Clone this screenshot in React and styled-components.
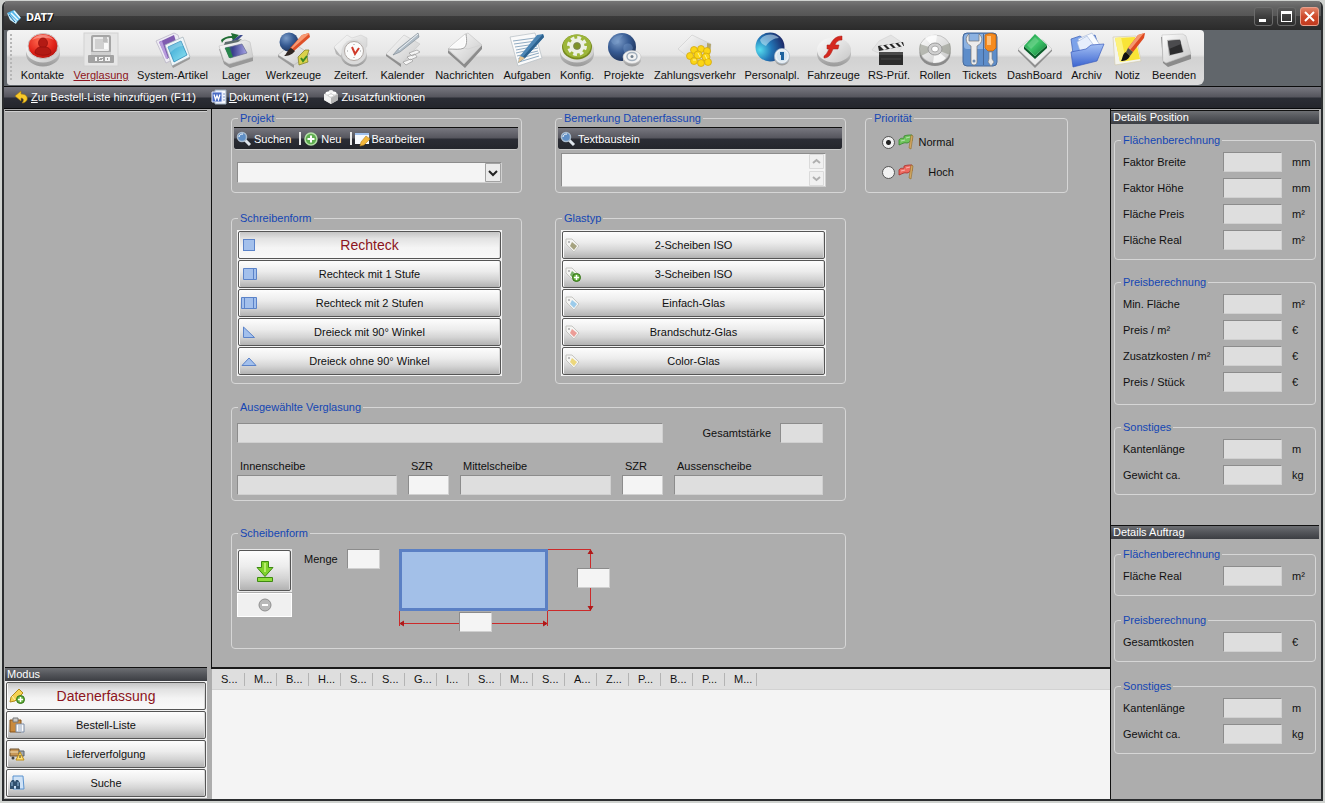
import React, { useId, useState } from 'react';
import styled, { createGlobalStyle, css } from 'styled-components';

const ink = '#101010';
const paper = '#f4f4f4';
const darkBar = 'linear-gradient(#77777f 0, #55555d 48%, #2b2d35 52%, #24262c 100%)';

const GlobalStyle = createGlobalStyle`
  * { box-sizing: border-box; }
  body { margin: 0; background: #cfd2cf; }
  body, button, input, select, textarea {
    font-family: "Liberation Sans", Arial, sans-serif;
    font-size: 11px;
    line-height: 12px;
    color: ${ink};
  }
`;

/* ---------- window frame ---------- */

const Desktop = styled.div`
  display: flex;
  min-height: 100vh;
  padding: 1px 2px 2px;
`;

const Window = styled.div`
  flex: 1;
  min-width: 0;
  display: flex;
  flex-direction: column;
  border: solid #2b2d2f;
  border-width: 0 2px 2px;
  border-radius: 6px 6px 0 0;
  background: #adadad;
  overflow: hidden;
`;

const TitleBar = styled.header`
  display: flex;
  align-items: center;
  gap: 4px;
  height: 29px;
  padding: 2px 2px 0;
  background: linear-gradient(#767676 0, #636363 20%, #565656 50%, #3b3b3b 52%, #2b2b2b 100%);
`;

const Title = styled.h1`
  flex: 1;
  margin: 0;
  font: bold 11px/16px "Noto Sans", sans-serif;
  color: #fff;
  text-shadow: 1px 1px 0 #111;
`;

const WindowButtons = styled.div`
  display: flex;
  gap: 4px;
`;

const WindowButton = styled.button`
  width: 19px;
  height: 19px;
  padding: 0;
  border: 1px solid ${(p) => (p.$close ? '#e9a08c' : '#6b6b6b')};
  border-radius: 3px;
  background: ${(p) =>
    p.$close ? 'linear-gradient(#e08268, #cf4a2c 50%, #c23a1e)' : 'linear-gradient(#5a5a5a, #3e3e3e 50%, #2d2d2d)'};
  svg { display: block; }
`;

/* ---------- tool strips ---------- */

const ToolStrip = styled.div`
  display: flex;
  height: 57px;
  padding: 0 3px;
  border-bottom: 1px solid #0c0c0c;
  background: #61666b;
`;

const Tools = styled.nav`
  display: flex;
  height: 55px;
  padding-right: 4px;
  border-radius: 3px 4px 6px 3px;
  background: linear-gradient(#f3f3f3, #e6e6e6 45%, #d2d2d2 50%, #dcdcdc 100%);
`;

const Grip = styled.span`
  width: 9px;
  margin: 3px 0;
  background: radial-gradient(circle, #b6b6b6 1px, transparent 1px) 2px 0 / 4px 4px repeat-y;
`;

const Tool = styled.button`
  display: flex;
  flex-direction: column;
  align-items: center;
  width: ${(p) => p.$width}px;
  padding: 2px 0 0;
  border: 0;
  background: none;
  white-space: nowrap;
  color: ${(p) => (p.$active ? '#8c1420' : ink)};
  text-decoration: ${(p) => (p.$active ? 'underline' : 'none')};
  svg { flex: none; margin-bottom: 1px; }
`;

const MenuBar = styled.nav`
  display: flex;
  align-items: center;
  gap: 15px;
  height: 22px;
  padding: 0 9px 2px;
  border-bottom: 1px solid #08090b;
  background: ${darkBar};
`;

const BarButton = styled.button`
  display: flex;
  align-items: center;
  gap: 2px;
  padding: 0;
  border: 0;
  background: none;
  color: #fff;
  white-space: nowrap;
`;

/* ---------- body ---------- */

const Body = styled.div`
  flex: 1;
  display: grid;
  grid-template-columns: 207px minmax(0, 1fr) 211px;
`;

const Side = styled.aside`
  display: flex;
  flex-direction: column;
  justify-content: space-between;
  padding: 1px 4px 1px 1px;
`;

const TopRule = styled.div`
  height: 2px;
  border-top: 1px solid #2a2a2a;
  border-bottom: 1px solid #d0d0d0;
`;

const PanelTitle = styled.h2`
  height: 14px;
  margin: 0;
  padding-left: 2px;
  border-top: 1px solid #111;
  background: linear-gradient(#6d6f73, #55575c 45%, #3c3e43);
  font: 11px/12px "Liberation Sans", Arial, sans-serif;
  color: #fff;
`;

const Center = styled.main`
  display: flex;
  flex-direction: column;
  min-width: 0;
`;

const Form = styled.div`
  display: flex;
  align-items: flex-start;
  gap: 19px;
  padding: 3px 19px 18px;
  border-left: 1px solid #111;
  border-bottom: 2px solid #1a1a1a;
`;

const FormColumn = styled.div`
  display: flex;
  flex-direction: column;
  width: 615px;
`;

const FormRow = styled.div`
  display: grid;
  grid-template-columns: repeat(${(p) => p.$columns ?? 1}, 1fr);
  gap: 33px;
  margin-bottom: ${(p) => p.$after ?? 0}px;
`;

const Group = styled.fieldset`
  min-width: 0;
  margin: 0;
  padding: 3px 3px ${(p) => p.$bottom ?? 9}px 2px;
  border: 1px solid #d6d6d6;
  border-radius: 4px;
  ${(p) => p.$width && css`width: ${p.$width}px;`}
`;

const Legend = styled.legend`
  margin-left: 4px;
  padding: 0 2px;
  color: #1446b4;
`;

const Inset = styled.div`
  margin-left: 3px;
  padding-top: ${(p) => p.$top ?? 3}px;
`;

const GroupBar = styled.div`
  display: flex;
  align-items: center;
  gap: 6px;
  height: 23px;
  padding: 0 2px;
  border-top: 1px solid #111;
  border-bottom: 1px solid #c8c8c8;
  border-radius: 0 0 3px 3px;
  background: ${darkBar};
`;

const BarDivider = styled.span`
  width: 2px;
  height: 13px;
  margin: 0 -4px 0 2px;
  background: #e8e8e8;
`;

const boxed = css`
  display: block;
  margin: 0;
  padding: 0 3px;
  border: 1px solid;
  border-color: #8c8c8c #d0d0d0 #d0d0d0 #8c8c8c;
  border-radius: 0;
  outline: 0;
`;

const Field = styled.input`
  ${boxed}
  width: ${(p) => (p.$width ? `${p.$width}px` : '100%')};
  height: 20px;
  background: ${(p) => (p.readOnly ? '#dedede' : paper)};
`;

const SelectBox = styled.div`
  display: grid;
  align-items: center;
  justify-items: end;
  width: 265px;
  > * { grid-area: 1 / 1; }
  svg { margin-right: 1px; pointer-events: none; }
`;

const Select = styled.select`
  ${boxed}
  width: 100%;
  height: 21px;
  appearance: none;
  background: ${paper};
`;

const NoteBox = styled.div`
  display: grid;
  justify-items: end;
  align-items: center;
  width: 265px;
  > * { grid-area: 1 / 1; }
  svg { margin-right: 2px; }
`;

const Note = styled.textarea`
  ${boxed}
  width: 100%;
  height: 34px;
  resize: none;
  background: ${paper};
`;

const RadioRow = styled.label`
  display: flex;
  align-items: center;
  gap: 3px;
  width: 72px;
  height: 30px;
  margin-left: 14px;
`;

const RadioText = styled.span`
  flex: 1;
  text-align: right;
`;

const Radio = styled.input`
  appearance: none;
  width: 13px;
  height: 13px;
  margin: 0;
  border: 1px solid #555;
  border-radius: 50%;
  background: #f1f1f1;
  &:checked { background: radial-gradient(circle, #222 0 2px, #f1f1f1 3px); }
`;

/* ---------- stacked push buttons ---------- */

const Stack = styled.div`
  display: flex;
  flex-direction: column;
  gap: 1px;
  ${(p) => p.$width && css`width: ${p.$width}px;`}
  padding: 1px;
  background: #f2f2f2;
`;

const raised = css`
  border: 1px solid #555;
  border-radius: 2px;
  background: linear-gradient(#fdfdfd, #ececec 40%, #d4d4d4 70%, #b2b2b2);
  box-shadow: inset 1px 0 0 #fff, inset -1px 0 0 #d8d8d8;
`;

const StackButton = styled.button`
  ${raised}
  display: grid;
  grid-template-columns: 16px 1fr 16px;
  align-items: center;
  height: 28px;
  padding: 0 2px;
  ${(p) =>
    p.$active &&
    css`
      background: linear-gradient(#c4c4c4, #e2e2e2 25%, #f4f4f4 60%, #f8f8f8);
      color: #8c1420;
      font-size: 14px;
      line-height: 16px;
    `}
`;

/* ---------- glazing details ---------- */

const SummaryRow = styled.div`
  display: flex;
  align-items: center;
  justify-content: space-between;
  width: 586px;
  margin-bottom: 17px;
`;

const Labelled = styled.div`
  display: flex;
  align-items: center;
  gap: 9px;
`;

const PaneGrid = styled.div`
  display: grid;
  grid-template-columns: 160px 41px 151px 41px 149px;
  gap: 11px;
  label { display: block; padding: 0 0 3px 3px; }
`;

const ShapeRow = styled.div`
  display: flex;
  align-items: flex-start;
`;

const Actions = styled.div`
  display: flex;
  flex-direction: column;
  gap: 1px;
  width: 55px;
  margin-right: 12px;
`;

const SaveFrame = styled.div`
  padding: 1px;
  background: #e8e8e8;
`;

const SaveButton = styled.button`
  ${raised}
  display: grid;
  place-items: center;
  width: 100%;
  height: 41px;
  padding: 0;
`;

const RemoveButton = styled.button`
  display: grid;
  place-items: center;
  height: 24px;
  padding: 0;
  border: 1px solid #fff;
  background: #f0f0f0;
`;

const Drawing = styled.div`
  position: relative;
  width: 212px;
  height: 84px;
  margin-left: 19px;
  svg { display: block; }
`;

const Dimension = styled(Field)`
  position: absolute;
  left: ${(p) => p.$x}px;
  top: ${(p) => p.$y}px;
`;

/* ---------- list ---------- */

const ListArea = styled.div`
  flex: 1;
  margin-left: 1px;
  background: ${paper};
`;

const ListHead = styled.div`
  height: 21px;
  border-bottom: 1px solid #d2d2d2;
  background: #dedede;
`;

const List = styled.table`
  table-layout: fixed;
  width: 545px;
  border-collapse: collapse;
`;

const ListHeading = styled.th`
  width: ${(p) => (p.$first ? 33 : 32)}px;
  height: 20px;
  padding: 0 0 0 9px;
  background: linear-gradient(#b4b4b4, #b4b4b4) right center / 1px 13px no-repeat;
  text-align: left;
  font-weight: normal;
  white-space: nowrap;
`;

/* ---------- details ---------- */

const Details = styled.aside`
  border-left: 1px solid #111;
  padding-top: 1px;
`;

const DetailSection = styled.section`
  margin: 0 2px 30px 0;
`;

const DetailGroups = styled.div`
  display: flex;
  flex-direction: column;
  gap: ${(p) => p.$gap}px;
  padding: ${(p) => p.$top}px 3px 0;
`;

const DetailRows = styled.div`
  display: flex;
  flex-direction: column;
  gap: 6px;
  padding: 3px 0 0 6px;
`;

const DetailRow = styled.div`
  display: grid;
  grid-template-columns: 100px 59px 1fr;
  align-items: center;
  white-space: nowrap;
`;

const Unit = styled.span`
  padding-left: 10px;
`;

/* ---------- drawings ---------- */

const HiddenDefs = styled.svg`
  position: absolute;
`;

const Art = ({ size = 36, children }) => (
  <svg width={size} height={size} viewBox={`0 0 ${size} ${size}`} aria-hidden="true">
    {children}
  </svg>
);

const Defs = () => (
  <HiddenDefs width="0" height="0" aria-hidden="true">
    <defs>
      <linearGradient id="puck" x1="0" y1="0" x2="1" y2="1">
        <stop offset="0" stopColor="#fdfdfd" /><stop offset="1" stopColor="#c6c6c6" />
      </linearGradient>
      <linearGradient id="rim" x1="0" y1="0" x2="0" y2="1">
        <stop offset="0" stopColor="#dedede" /><stop offset="1" stopColor="#999" />
      </linearGradient>
      <radialGradient id="red" cx=".4" cy=".3" r=".8">
        <stop offset="0" stopColor="#ff6a50" /><stop offset=".6" stopColor="#e2231a" /><stop offset="1" stopColor="#a50f0c" />
      </radialGradient>
      <radialGradient id="globe" cx=".35" cy=".3" r=".8">
        <stop offset="0" stopColor="#7b9cc8" /><stop offset=".5" stopColor="#365a92" /><stop offset="1" stopColor="#1a2c50" />
      </radialGradient>
      <radialGradient id="bright" cx=".15" cy=".6" r=".9">
        <stop offset="0" stopColor="#55dcee" /><stop offset=".45" stopColor="#2277b8" /><stop offset="1" stopColor="#1b2260" />
      </radialGradient>
      <linearGradient id="cyan" x1="0" y1="0" x2="1" y2="1">
        <stop offset="0" stopColor="#2f9fd0" /><stop offset="1" stopColor="#8fe4f2" />
      </linearGradient>
      <linearGradient id="green" x1="0" y1="0" x2="1" y2="1">
        <stop offset="0" stopColor="#1c9a48" /><stop offset=".5" stopColor="#3fc46a" /><stop offset="1" stopColor="#0f7a35" />
      </linearGradient>
      <linearGradient id="folder" x1="0" y1="0" x2="0" y2="1">
        <stop offset="0" stopColor="#a5c1f5" /><stop offset="1" stopColor="#3b64cf" />
      </linearGradient>
      <linearGradient id="screen" x1="0" y1="0" x2="1" y2="0">
        <stop offset="0" stopColor="#2c8a4a" /><stop offset=".35" stopColor="#3b3f8e" /><stop offset="1" stopColor="#a9a6e8" />
      </linearGradient>
    </defs>
  </HiddenDefs>
);

const Puck = () => (
  <>
    <ellipse cx="18" cy="22" rx="17" ry="12.500" fill="url(#rim)" />
    <ellipse cx="18" cy="18" rx="17" ry="12.500" fill="url(#puck)" />
  </>
);

const toolArt = {
  contacts: (
    <Art>
      <Puck />
      <ellipse cx="18" cy="14" rx="15" ry="12.500" fill="url(#red)" stroke="#c8c8c8" />
      <path d="M7 8c5-7 17-7 22 0C23 5 13 5 7 8z" fill="#fff" opacity=".35" />
      <ellipse cx="18" cy="11" rx="4.500" ry="5" fill="#b31a14" stroke="#8f0f0c" strokeWidth=".7" />
      <path d="M10 21c0-4 3-6 6-6h4c3 0 6 2 6 6-4 3-12 3-16 0z" fill="#b31a14" stroke="#8f0f0c" strokeWidth=".7" />
    </Art>
  ),
  glazing: (
    <Art>
      <rect x="1" y="1" width="34" height="33" fill="#e6e6e6" stroke="#d2d2d2" />
      <rect x="8" y="3" width="20" height="18" rx="2" fill="#a6a6a6" />
      <rect x="10" y="5" width="16" height="14" rx="1" fill="#ececec" />
      <path d="M12 7h13v4h-4v6h-9z" fill="#d0d0d0" /><path d="M21 11h4v6h-4z" fill="#fafafa" /><path d="M20 5h4v5h-4z" fill="#bdbdbd" />
      <path d="M8 20h20v3H8z" fill="#cfcfcf" />
      <rect x="5" y="23" width="26" height="8" rx="1" fill="#a2a2a2" />
      <path d="M12 25h2v4h-2zM16 25h4v1h-3v1h3v2h-4v-1h3v-1h-3zM22 25h5v4h-5zM24 26v2h1v-2z" fill="#f4f4f4" />
    </Art>
  ),
  system: (
    <Art>
      <path d="m1 9 18-8 4 2 6 19-18 9z" fill="#eeecf4" stroke="#b4afc2" strokeWidth=".7" />
      <path d="m4 10 15-7 5 16-12 8z" fill="#7f5bb0" /><path d="m4 10 3-1 6 17-2 1z" fill="#b79bdc" />
      <path d="m10 13 18-8 7 20-18 9z" fill="#eef5f8" stroke="#a4b0b8" strokeWidth=".7" />
      <path d="m13 15 13-6 6 14-13 7z" fill="url(#cyan)" stroke="#1d7fb2" strokeWidth=".7" />
      <path d="m13 15 13-6 2 5c-5 0-9 3-13 7z" fill="#fff" opacity=".25" />
      <path d="m17 34 18-9v2l-17 9z" fill="#9a9a9a" />
    </Art>
  ),
  stock: (
    <Art>
      <path d="m1 17 5 15 6 4 23-7v-4z" fill="#999" />
      <path d="m1 14 26-6 5 2 3 15-24 7-5-3z" fill="url(#puck)" stroke="#c0c0c0" strokeWidth=".6" />
      <path d="m7 16 17-4 5 9-17 5z" fill="url(#screen)" stroke="#666a90" strokeWidth=".7" />
      <path d="m11 15 4 10-4 1-4-10z" fill="#27854a" />
      <path d="M3 8c2-2 6-4 11-4l-1-3 8 2-6 6-1-3c-5 0-8 1-10 5z" fill="#1f6c33" />
      <path d="m12 10 10-7h3l-5 5z" fill="#3d4a8c" /><path d="m7 10 17-3-4 3-14 3z" fill="#5d6c6c" />
    </Art>
  ),
  tools: (
    <Art>
      <path d="m2 23 15-12 17 11-16 11z" fill="url(#puck)" stroke="#b4b4b4" strokeWidth=".6" /><path d="m2 23 16 10v3L2 25z" fill="#999" />
      <circle cx="13" cy="10" r="9.500" fill="url(#globe)" />
      <path d="m26 3 7-2 1 4-16 14-4-3z" fill="#de5028" /><path d="m26 3 7-2v1L16 17l-1-1z" fill="#f79a74" />
      <path d="m15 16 4 3c-3 4-7 5-11 5 3-2 3-6 7-8z" fill="#2f2622" />
      <path d="m22 25 7-7h4l-2 6 1 6-9 3z" fill="#d9d24a" stroke="#7c7b20" strokeWidth=".7" />
      <path d="m25 26 2 3 4-5" fill="none" stroke="#3a8a24" strokeWidth="2" />
    </Art>
  ),
  time: (
    <Art>
      <path d="M1 15 14 3l5 3 9-3 6 3v8L21 32 4 22z" fill="url(#puck)" stroke="#cacaca" strokeWidth=".5" />
      <path d="m1 15 6 8 9 4v4L3 22z" fill="#b5b5b5" />
      <ellipse cx="21" cy="24" rx="13" ry="10.500" fill="url(#rim)" />
      <circle cx="21" cy="20" r="12.500" fill="#dadada" /><circle cx="21" cy="19" r="9.500" fill="#fbfbfb" stroke="#b0a8a4" />
      <path d="m19 15 3 7 4-6" fill="none" stroke="#d03a2a" strokeWidth="2" />
      <path d="M21 12v1M21 25v1M14 19h1M27 19h1" stroke="#999" />
    </Art>
  ),
  calendar: (
    <Art>
      <path d="M1 22 19 3l16 9-19 20z" fill="url(#puck)" stroke="#c6c6c6" strokeWidth=".6" />
      <path d="m1 22 15 10v3L1 24z" fill="#8f8f8f" />
      <path d="M33 1 13 17l-5 6 7-3L34 5z" fill="#b2bec8" stroke="#78848e" strokeWidth=".6" /><path d="M33 2 14 18" stroke="#eef2f5" />
      <path d="m24 21 8-3 3 2-8 4zM22 25l8-3 2 3-7 3zM18 30l8-3 2 2-7 4z" fill="#f6f6f6" stroke="#9a9a9a" strokeWidth=".7" />
    </Art>
  ),
  messages: (
    <Art>
      <path d="M1 18 17 32l18-19v4L18 36 1 21z" fill="#8c8c8c" />
      <path d="M1 17 5 13 18 2l3-1 14 12-18 19z" fill="url(#puck)" stroke="#c0c0c0" strokeWidth=".6" />
      <path d="M19 2c1 7 1 11-2 14-4 2-9 1-16 1" fill="#fff" stroke="#a3a3a3" /><path d="m3 16 15-12c0 6 0 8-2 11-4 1-8 1-13 1z" fill="#fafafa" />
      <path d="m17 16 4 1 13-4" fill="none" stroke="#d5d5d5" />
    </Art>
  ),
  tasks: (
    <Art>
      <path d="m1 5 25-4 7 25-24 8z" fill="#fafafa" stroke="#b5bdc3" strokeWidth=".7" />
      <path d="m4 9 22-3M5 12l22-3M6 15l21-3M7 18l21-4M7 21l22-5M8 24l21-5M9 27l21-6M10 30l20-6" stroke="#7597b4" strokeWidth=".8" />
      <path d="m28 3 6-1 1 3-19 21-7 5 2-7z" fill="#4d86b5" /><path d="m34 2 1 3-19 21-7 5 3-4z" fill="#2d628f" />
      <path d="m11 24 5 2-7 5z" fill="#e6c594" />
    </Art>
  ),
  config: (
    <Art>
      <Puck />
      <ellipse cx="18" cy="15" rx="15" ry="12.500" fill="#76891f" /><ellipse cx="18" cy="14" rx="14" ry="11.500" fill="#9db63a" />
      <circle cx="18" cy="14" r="8" fill="none" stroke="#edf0e4" strokeWidth="4" strokeDasharray="3.600 2.680" />
      <circle cx="18" cy="14" r="5.500" fill="none" stroke="#edf0e4" strokeWidth="4" />
      <circle cx="18" cy="14" r="3.500" fill="#7e9228" stroke="#777" strokeWidth=".6" />
    </Art>
  ),
  projects: (
    <Art>
      <circle cx="16" cy="15" r="14" fill="url(#globe)" />
      <path d="M5 9c4-6 9-6 12-6-1 3-5 4-4 8-3 1-5 4-8-2zM18 13c5-3 8-1 9 3-2 5-4 7-7 9-1-5-4-7-2-12z" fill="#7da0cc" opacity=".4" />
      <ellipse cx="26" cy="28" rx="9" ry="6.500" fill="url(#rim)" /><ellipse cx="26" cy="25" rx="9" ry="6.500" fill="#f2f2f2" stroke="#c2c2c2" strokeWidth=".6" />
      <ellipse cx="26" cy="24.500" rx="5" ry="4" fill="none" stroke="#a3b0bd" strokeWidth="1.500" /><circle cx="26" cy="24.500" r="1.500" fill="#72818f" />
    </Art>
  ),
  payments: (
    <Art>
      <path d="m1 17 14-14 19 9-1 10-18 6z" fill="url(#puck)" stroke="#cacaca" strokeWidth=".6" />
      <path d="m30 11 4 1-1 10-3-2z" fill="#b3a568" />
      <g fill="#fbd515" stroke="#cfa20c" strokeWidth=".7">
        <circle cx="17" cy="18" r="3.500" /><circle cx="24" cy="17" r="3.500" /><circle cx="30" cy="19" r="3.500" />
        <circle cx="13" cy="24" r="3.500" /><circle cx="21" cy="23" r="4" /><circle cx="29" cy="25" r="4" />
        <circle cx="17" cy="29" r="3.500" /><circle cx="24" cy="31" r="3.500" /><circle cx="31" cy="30" r="3.500" />
      </g>
      <path d="m21 21 2 4M28 23l2 4M16 28h3" stroke="#fff7a0" />
    </Art>
  ),
  staff: (
    <Art>
      <circle cx="16" cy="15" r="14.500" fill="url(#bright)" />
      <path d="M6 8c4-7 15-7 19-2-5 0-10 3-13 8-2-1-5-2-6-6z" fill="#d9f2fb" opacity=".5" />
      <ellipse cx="28" cy="27" rx="7.500" ry="6.500" fill="url(#rim)" /><circle cx="28" cy="24" r="7.500" fill="#edf2f6" stroke="#a9bccb" strokeWidth=".7" />
      <circle cx="28" cy="24" r="5.500" fill="#d6e5f0" /><path d="M26 20h4v8h-3v-5h-1z" fill="#1b619e" />
    </Art>
  ),
  vehicles: (
    <Art>
      <Puck />
      <path d="M26 4c-7 0-10 5-12 9h-3v4h2c-2 4-3 6-5 7v2c5 0 7-4 9-9h5l1-4h-4c1-3 3-5 7-5z" fill="#d5281f" stroke="#a81c16" strokeWidth=".5" />
    </Art>
  ),
  inspect: (
    <Art>
      <path d="m1 18 7-9L20 3l13 9-5 8-14 4z" fill="#e4e4e4" stroke="#d0d0d0" strokeWidth=".6" />
      <path d="m7 14 25-4 1 4-25 5z" fill="#262626" />
      <path d="m9 14 4 4 3-1-4-4zM15 13l4 4 3-1-4-4zM21 12l4 4 3-1-4-4zM27 11l4 4h2l-3-5z" fill="#ededed" />
      <path d="M8 20h24v13H8z" fill="#2c2c2c" /><path d="M8 20h24v3H8z" fill="#4a4a4a" /><path d="M10 27h20" stroke="#444" />
    </Art>
  ),
  rolls: (
    <Art>
      <ellipse cx="18" cy="21" rx="15.500" ry="13" fill="#8a8a8a" /><ellipse cx="18" cy="17" rx="15.500" ry="14" fill="url(#puck)" stroke="#aaa" strokeWidth=".6" />
      <path d="M18 17 8 6c3-3 8-4 12-3zM18 17l11 9c-3 4-8 5-13 5z" fill="#fff" opacity=".75" />
      <path d="M18 17 3 12c-1 4-1 8 1 12zM18 17l15-6c1 4 1 8 0 12z" fill="#8c8f84" opacity=".55" />
      <ellipse cx="18" cy="17" rx="7" ry="6" fill="#cfcfcf" stroke="#9c9c9c" /><ellipse cx="18" cy="17" rx="3.500" ry="3" fill="#fff" stroke="#aaa" />
    </Art>
  ),
  tickets: (
    <Art>
      <rect x="1" y="1" width="34" height="33" rx="4" fill="#5d8dca" stroke="#47699a" />
      <rect x="2" y="2" width="32" height="15" rx="3" fill="#8cb2e2" /><path d="M21.500 2v31" stroke="#47699a" />
      <path d="M7 2c-4 3-4 9 2 12v16c0 4 6 4 6 0V14c6-3 6-9 2-12v7h-3l-4 0H7z" fill="#ececec" stroke="#777" strokeWidth=".7" />
      <circle cx="12" cy="29" r="1.500" fill="#6f8bae" />
      <path d="M23 3c3-2 8-2 11 0v13l-3 3h-5l-3-3z" fill="#f68b1f" stroke="#b95f09" strokeWidth=".7" /><path d="M25 4h4v9h-4z" fill="#ffc078" />
      <path d="M27 20h3v7l2 3-3 4-3-4 1-3z" fill="#e6e6e6" stroke="#777" strokeWidth=".6" />
    </Art>
  ),
  dashboard: (
    <Art>
      <path d="m1 17 17 16 17-16v2L18 36 1 19z" fill="#8e8e8e" />
      <path d="m1 17 9-8 16-1 9 9-17 16z" fill="#ececec" stroke="#c4c4c4" strokeWidth=".6" />
      <path d="m7 14 11 10 12-11v3L18 27 7 17z" fill="#0a5d2a" /><path d="M7 14 18 2l12 11-12 11z" fill="url(#green)" />
      <path d="m10 13 8-8 4 4-8 8z" fill="#a2e8b4" opacity=".35" />
    </Art>
  ),
  archive: (
    <Art>
      <path d="m2 7 9-3 4 3 11-4 4 12-25 14z" fill="#7ba2ea" stroke="#3b5fb4" strokeWidth=".7" />
      <path d="m9 7 14-6 8 12-15 9z" fill="#f8fbff" stroke="#9eb2d6" strokeWidth=".6" /><path d="m8 10 10-6 8 11-14 7z" fill="#e6eefc" stroke="#9eb2d6" strokeWidth=".6" />
      <path d="m2 20 15-3 5-4 13-1-7 17-24 6z" fill="url(#folder)" stroke="#3d5fbd" strokeWidth=".7" />
    </Art>
  ),
  note: (
    <Art>
      <path d="m3 5 23-1 5 25-26 4z" fill="#f4f4ee" stroke="#d2ccb0" strokeWidth=".7" /><path d="m5 6 20-1 5 22-20 3z" fill="#f9e437" /><path d="m5 6 6-1 5 24-6 1z" fill="#fdf27c" />
      <path d="m28 3 7-2-1 5-11 14-5-4z" fill="#de4a22" /><path d="m28 3 6-2-14 17-2-2z" fill="#f59770" />
      <path d="m18 16 5 4-3 4-4-4z" fill="#4c4c4c" /><path d="m16 20 4 4c-2 4-5 5-9 5 2-3 1-7 5-9z" fill="#111" />
    </Art>
  ),
  quit: (
    <Art>
      <path d="m5 5 24-2 6 20v4L12 35l-5-4z" fill="#8b8b8b" />
      <path d="m6 3 21-1 3 2 5 18-25 9-3-2z" fill="url(#puck)" stroke="#c4c4c4" strokeWidth=".6" />
      <path d="m11 8 13-1 4 13-15 4z" fill="#b0b0b0" /><path d="m12 9 12-1 3 12-13 3z" fill="#2c2c2e" /><path d="m12 9 12-1 1 4-12 5z" fill="#4b4b4e" />
    </Art>
  ),
};

const plusBadge = (
  <>
    <circle cx="11.500" cy="11.500" r="4" fill="#63b23c" stroke="#347018" />
    <path d="M11.500 9v5M9 11.500h5" stroke="#fff" strokeWidth="1.500" />
  </>
);

const tag = (color, extra) => (
  <Art size={16}>
    <path d="M1 2h6l7 7-5 6-8-8z" fill="#f4f4f2" stroke="#c6c6c2" />
    <path d="m7 5 5 4-3 4-4-4z" fill={color} />
    <circle cx="4" cy="5" r="1" fill="#aaa" />
    {extra}
  </Art>
);

const shape = { fill: '#a3c0ec', stroke: '#5b83c9' };

const art = {
  app: (
    <Art size={16}>
      <path d="M1 4 8 1l7 8-5 5z" fill="#59b7e8" /><path d="m1 4 3 7 6 4 1-3z" fill="#c6ecfb" />
      <path d="m5 4 7 7M8 2l6 7" stroke="#eaf9ff" strokeWidth="1.500" /><path d="m3 6 6 7" stroke="#1b6aa8" />
    </Art>
  ),
  undo: (
    <Art size={16}>
      <path d="m2 7 6-5v3c5 0 7 3 6 6-1 2-3 3-5 3 2-2 2-5-1-5v3z" fill="#f7c92a" stroke="#a87b08" strokeWidth=".6" />
    </Art>
  ),
  word: (
    <Art size={16}>
      <path d="M4 1h11v14H4z" fill="#f7f9ff" stroke="#9ab" /><path d="M12 5h2M12 8h2M12 11h2" stroke="#7d94c6" />
      <path d="M1 3h10v10H1z" fill="#4a6cc4" stroke="#dfe6f8" /><path d="m3 5.500 1.500 5 1.500-4 1.500 4 1.500-5" fill="none" stroke="#fff" strokeWidth="1.300" />
    </Art>
  ),
  brick: (
    <Art size={16}>
      <path d="m1 5 7-3 7 3v6l-7 4-7-4z" fill="#d8d8d8" /><path d="m1 5 7 4v6l-7-4z" fill="#f1f1f1" /><path d="m15 5-7 4v6l7-4z" fill="#b5b5b5" />
      <ellipse cx="5" cy="4" rx="2.500" ry="1.500" fill="#fff" /><ellipse cx="11" cy="4" rx="2.500" ry="1.500" fill="#fff" />
      <ellipse cx="8" cy="2.500" rx="2.500" ry="1.500" fill="#f4f4f4" /><ellipse cx="8" cy="6.500" rx="2.500" ry="1.500" fill="#fff" stroke="#bbb" strokeWidth=".5" />
    </Art>
  ),
  search: (
    <Art size={16}>
      <path d="m9 9 5 5" stroke="#dfe5ec" strokeWidth="3" /><circle cx="6" cy="6" r="4.500" fill="#5f8fc6" stroke="#a9bccf" strokeWidth="1.500" />
      <path d="M3 6c0-2 2-3 4-3" stroke="#fff" fill="none" />
    </Art>
  ),
  add: (
    <Art size={16}>
      <circle cx="8" cy="8" r="6" fill="#5fae50" stroke="#b5e0a8" strokeWidth="1.500" /><path d="M8 4.500v7M4.500 8h7" stroke="#fff" strokeWidth="2" />
    </Art>
  ),
  edit: (
    <Art size={16}>
      <path d="M1 2h14v11H1z" fill="#f7fafe" /><path d="M1 2h14v2H1z" fill="#9fc0ec" />
      <path d="m12 5 4 3-6 6-4 1 1-4z" fill="#f3b73c" stroke="#b98522" strokeWidth=".6" />
    </Art>
  ),
  pencil: (
    <Art size={16}>
      <path d="m10 1 4 4-8 8-5 1 1-5z" fill="#f5d252" stroke="#b28a1b" /><path d="m3 8 3 4" stroke="#fff2b5" />{plusBadge}
    </Art>
  ),
  clipboard: (
    <Art size={16}>
      <path d="M1 3h11v12H1z" fill="#c98a3d" stroke="#85531a" /><path d="M4 1h5v4H4z" fill="#c9c9c9" stroke="#777" />
      <path d="M7 7h8v8H7z" fill="#fbfbfb" stroke="#7a8ba5" /><path d="M9 9h4M9 11h4M9 13h4" stroke="#97a8c1" />
    </Art>
  ),
  delivery: (
    <Art size={16}>
      <path d="M1 3h9v7H1z" fill="#c99857" stroke="#6f5330" /><path d="M1 6h9" stroke="#f2dfb8" /><path d="M10 5h5v5h-5z" fill="#9fa6ad" stroke="#5b6066" />
      <circle cx="4" cy="12" r="1.500" fill="#444" /><path d="m11 6 4 8H7z" fill="#ffe27a" stroke="#c08d12" /><path d="M11 9v3" stroke="#333" />
    </Art>
  ),
  binoculars: (
    <Art size={16}>
      <path d="M4 1h10l1 13H4z" fill="#cfe2f6" stroke="#5b93cf" /><path d="M1 14V8l2-3h2l1 2 1-2h2l2 3v6H7v-3H5v3z" fill="#31506f" /><path d="M3 7v4M9 7v4" stroke="#9bc0e2" />
    </Art>
  ),
  rect: <Art size={16}><rect x="2.500" y="2.500" width="11" height="11" {...shape} /></Art>,
  rect1: <Art size={16}><path d="M2.500 2.500h13v11h-13zM12.500 2.500v11" {...shape} /></Art>,
  rect2: <Art size={16}><path d="M.5 2.500h15v11H.5zM3.500 2.500v11M12.500 2.500v11" {...shape} /></Art>,
  tri90: <Art size={16}><path d="M2.500 3v10.500h11z" {...shape} /></Art>,
  tri: <Art size={16}><path d="M1 12.500 8 5l7 7.500z" {...shape} /></Art>,
  tagOlive: tag('#a5a27f'),
  tagPlus: tag('#79b069', plusBadge),
  tagBlue: tag('#9ccbea'),
  tagRed: tag('#ec9d97'),
  tagYellow: tag('#ecd77c'),
};

const Flag = ({ color, shade }) => (
  <Art size={16}>
    <path d="M1 6c2-3 4-1 5-2V2c3-1 5-1 8-1v6c-3 0-3 2-5 2-3-1-5 1-8 2z" fill={color} stroke={shade} strokeWidth=".8" />
    <path d="m3 7 4-1M8 4l4-1" stroke="#fff" opacity=".5" />
    <path d="m13 1 2 1-2 13-2-1z" fill="#d3a862" stroke="#8f6b2c" strokeWidth=".6" />
  </Art>
);

/* ---------- data ---------- */

const tools = [
  ['Kontakte', 'contacts', 53], ['Verglasung', 'glazing', 64], ['System-Artikel', 'system', 79], ['Lager', 'stock', 48],
  ['Werkzeuge', 'tools', 67], ['Zeiterf.', 'time', 48], ['Kalender', 'calendar', 55], ['Nachrichten', 'messages', 69],
  ['Aufgaben', 'tasks', 56], ['Konfig.', 'config', 44], ['Projekte', 'projects', 50], ['Zahlungsverkehr', 'payments', 92],
  ['Personalpl.', 'staff', 62], ['Fahrzeuge', 'vehicles', 61], ['RS-Prüf.', 'inspect', 50], ['Rollen', 'rolls', 42],
  ['Tickets', 'tickets', 47], ['DashBoard', 'dashboard', 63], ['Archiv', 'archive', 41], ['Notiz', 'note', 41],
  ['Beenden', 'quit', 52],
];

const modes = [
  ['Datenerfassung', 'pencil'], ['Bestell-Liste', 'clipboard'], ['Lieferverfolgung', 'delivery'], ['Suche', 'binoculars'],
];

const shapes = [
  ['Rechteck', 'rect'], ['Rechteck mit 1 Stufe', 'rect1'], ['Rechteck mit 2 Stufen', 'rect2'],
  ['Dreieck mit 90° Winkel', 'tri90'], ['Dreieck ohne 90° Winkel', 'tri'],
];

const glassTypes = [
  ['2-Scheiben ISO', 'tagOlive'], ['3-Scheiben ISO', 'tagPlus'], ['Einfach-Glas', 'tagBlue'],
  ['Brandschutz-Glas', 'tagRed'], ['Color-Glas', 'tagYellow'],
];

const panes = [
  ['Innenscheibe', true], ['SZR', false], ['Mittelscheibe', true], ['SZR', false], ['Aussenscheibe', true],
];

const columns = ['S', 'M', 'B', 'H', 'S', 'S', 'G', 'I', 'S', 'M', 'S', 'A', 'Z', 'P', 'B', 'P', 'M'];

const positionDetails = [
  { title: 'Flächenberechnung', rows: [['Faktor Breite', 'mm'], ['Faktor Höhe', 'mm'], ['Fläche Preis', 'm²'], ['Fläche Real', 'm²']] },
  { title: 'Preisberechnung', bottom: 12, rows: [['Min. Fläche', 'm²'], ['Preis / m²', '€'], ['Zusatzkosten / m²', '€'], ['Preis / Stück', '€']] },
  { title: 'Sonstiges', rows: [['Kantenlänge', 'm'], ['Gewicht ca.', 'kg']] },
];

const orderDetails = [
  { title: 'Flächenberechnung', rows: [['Fläche Real', 'm²']] },
  { title: 'Preisberechnung', rows: [['Gesamtkosten', '€']] },
  { title: 'Sonstiges', rows: [['Kantenlänge', 'm'], ['Gewicht ca.', 'kg']] },
];

/* ---------- parts ---------- */

function ButtonStack({ items, width, initial = null }) {
  const [active, setActive] = useState(initial);
  return (
    <Stack $width={width}>
      {items.map(([label, icon]) => (
        <StackButton key={label} type="button" $active={label === active} onClick={() => setActive(label)}>
          {art[icon]}
          <span>{label}</span>
        </StackButton>
      ))}
    </Stack>
  );
}

function PaneField({ label, readOnly }) {
  const id = useId();
  return (
    <div>
      <label htmlFor={id}>{label}</label>
      <Field id={id} readOnly={readOnly} />
    </div>
  );
}

function InlineField({ label, width, readOnly }) {
  const id = useId();
  return (
    <Labelled>
      <label htmlFor={id}>{label}</label>
      <Field id={id} $width={width} readOnly={readOnly} />
    </Labelled>
  );
}

function DetailField({ label, unit }) {
  const id = useId();
  return (
    <DetailRow>
      <label htmlFor={id}>{label}</label>
      <Field id={id} readOnly />
      <Unit>{unit}</Unit>
    </DetailRow>
  );
}

function DetailPanel({ title, groups, gap, top }) {
  return (
    <DetailSection>
      <PanelTitle>{title}</PanelTitle>
      <DetailGroups $gap={gap} $top={top}>
        {groups.map((g) => (
          <Group key={g.title} $bottom={g.bottom}>
            <Legend>{g.title}</Legend>
            <DetailRows>
              {g.rows.map(([label, unit]) => (
                <DetailField key={label} label={label} unit={unit} />
              ))}
            </DetailRows>
          </Group>
        ))}
      </DetailGroups>
    </DetailSection>
  );
}

export default function App() {
  const [tool, setTool] = useState('Verglasung');
  return (
    <Desktop lang="de">
      <GlobalStyle />
      <Defs />
      <Window>
        <TitleBar>
          {art.app}
          <Title>DAT7</Title>
          <WindowButtons>
            <WindowButton type="button" aria-label="Minimieren">
              <svg width="17" height="17"><path d="M4 11h7v3H4z" fill="#fff" /></svg>
            </WindowButton>
            <WindowButton type="button" aria-label="Maximieren">
              <svg width="17" height="17"><path d="M3 3h11v11H3zM4 6v7h9V6z" fill="#fff" fillRule="evenodd" /></svg>
            </WindowButton>
            <WindowButton type="button" aria-label="Schließen" $close>
              <svg width="17" height="17"><path d="m4 4 9 9M13 4l-9 9" stroke="#fff" strokeWidth="2" /></svg>
            </WindowButton>
          </WindowButtons>
        </TitleBar>

        <ToolStrip>
          <Tools>
            <Grip />
            {tools.map(([label, icon, width]) => (
              <Tool key={label} type="button" $width={width} $active={label === tool} onClick={() => setTool(label)}>
                {toolArt[icon]}
                <span>{label}</span>
              </Tool>
            ))}
          </Tools>
        </ToolStrip>

        <MenuBar>
          <BarButton type="button">{art.undo}<span><u>Z</u>ur Bestell-Liste hinzufügen (F11)</span></BarButton>
          <BarButton type="button">{art.word}<span><u>D</u>okument (F12)</span></BarButton>
          <BarButton type="button">{art.brick}<span>Zusatzfunktionen</span></BarButton>
        </MenuBar>

        <Body>
          <Side>
            <TopRule />
            <div>
              <PanelTitle>Modus</PanelTitle>
              <ButtonStack items={modes} initial="Datenerfassung" />
            </div>
          </Side>

          <Center>
            <Form>
              <FormColumn>
                <FormRow $columns={2} $after={19}>
                  <Group>
                    <Legend>Projekt</Legend>
                    <GroupBar>
                      <BarButton type="button">{art.search}Suchen</BarButton>
                      <BarDivider />
                      <BarButton type="button">{art.add}Neu</BarButton>
                      <BarDivider />
                      <BarButton type="button">{art.edit}Bearbeiten</BarButton>
                    </GroupBar>
                    <Inset $top={12}>
                      <SelectBox>
                        <Select aria-label="Projekt"><option value="" /></Select>
                        <svg width="16" height="19">
                          <path d="M.5.5h15v18H.5z" fill="#ebebeb" stroke="#a2a2a2" />
                          <path d="m4 8 4 4 4-4" fill="none" stroke="#222" strokeWidth="2" />
                        </svg>
                      </SelectBox>
                    </Inset>
                  </Group>
                  <Group $bottom={5}>
                    <Legend>Bemerkung Datenerfassung</Legend>
                    <GroupBar>
                      <BarButton type="button">{art.search}Textbaustein</BarButton>
                    </GroupBar>
                    <Inset>
                      <NoteBox>
                        <Note aria-label="Bemerkung Datenerfassung" />
                        <svg width="15" height="32">
                          <path d="M.5.5h14v14H.5zM.5 17.500h14v14H.5z" fill="#f0f0f0" stroke="#dadada" />
                          <path d="m4 9 3.500-3L11 9M4 23l3.500 3 3.500-3" fill="none" stroke="#b0b0b0" strokeWidth="2" />
                        </svg>
                      </NoteBox>
                    </Inset>
                  </Group>
                </FormRow>

                <FormRow $columns={2} $after={17}>
                  <Group $bottom={7}>
                    <Legend>Schreibenform</Legend>
                    <Inset><ButtonStack items={shapes} width={265} initial="Rechteck" /></Inset>
                  </Group>
                  <Group $bottom={7}>
                    <Legend>Glastyp</Legend>
                    <Inset><ButtonStack items={glassTypes} width={265} /></Inset>
                  </Group>
                </FormRow>

                <FormRow $after={26}>
                  <Group $bottom={5}>
                    <Legend>Ausgewählte Verglasung</Legend>
                    <Inset $top={7}>
                      <SummaryRow>
                        <Field $width={426} aria-label="Ausgewählte Verglasung" readOnly />
                        <InlineField label="Gesamtstärke" width={43} readOnly />
                      </SummaryRow>
                      <PaneGrid>
                        {panes.map(([label, readOnly], i) => (
                          <PaneField key={i} label={label} readOnly={readOnly} />
                        ))}
                      </PaneGrid>
                    </Inset>
                  </Group>
                </FormRow>

                <FormRow>
                  <Group $bottom={15}>
                    <Legend>Scheibenform</Legend>
                    <Inset $top={7}>
                      <ShapeRow>
                        <Actions>
                          <SaveFrame>
                            <SaveButton type="button" aria-label="Übernehmen">
                              <svg width="24" height="24">
                                <path d="M8.500 2.500h7v6h4.500l-8 9-8-9h4.500z" fill="#7fd22c" stroke="#3e8a12" />
                                <path d="M11 4h2v9h-2z" fill="#b9ee6c" />
                                <path d="M4.500 18.500h15v4h-15z" fill="#8fdc3c" stroke="#3e8a12" />
                              </svg>
                            </SaveButton>
                          </SaveFrame>
                          <RemoveButton type="button" aria-label="Entfernen">
                            <svg width="14" height="14">
                              <circle cx="7" cy="7" r="6" fill="#b9b9b9" stroke="#8f8f8f" /><path d="M4 7h6" stroke="#fff" strokeWidth="2" />
                            </svg>
                          </RemoveButton>
                        </Actions>
                        <InlineField label="Menge" width={33} />
                        <Drawing>
                          <svg width="212" height="84">
                            <rect x="1.500" y="1.500" width="146" height="59" fill="#a3c0e8" stroke="#5b80c4" strokeWidth="3" />
                            <path d="M149 .5h43M149 61.500h43M191.500 1v60M.5 62v15M148.500 62v15M1 74.500h147" fill="none" stroke="#cc2a2a" />
                            <path d="m189 5 2.500-4 2.500 4M189 57l2.500 4 2.500-4M5 72l-4 2.500L5 77M144 72l4 2.500-4 2.500" fill="#b01818" stroke="#b01818" />
                          </svg>
                          <Dimension aria-label="Höhe" $width={33} $x={178} $y={19} />
                          <Dimension aria-label="Breite" $width={33} $x={60} $y={63} />
                        </Drawing>
                      </ShapeRow>
                    </Inset>
                  </Group>
                </FormRow>
              </FormColumn>

              <Group $width={203} $bottom={5}>
                <Legend>Priorität</Legend>
                <RadioRow>
                  <Radio type="radio" name="priority" defaultChecked />
                  <Flag color="#6fc45c" shade="#33852a" />
                  <RadioText>Normal</RadioText>
                </RadioRow>
                <RadioRow>
                  <Radio type="radio" name="priority" />
                  <Flag color="#ee6a60" shade="#a92a24" />
                  <RadioText>Hoch</RadioText>
                </RadioRow>
              </Group>
            </Form>

            <ListArea>
              <ListHead>
                <List>
                  <thead>
                    <tr>
                      {columns.map((c, i) => (
                        <ListHeading key={i} scope="col" $first={i === 0}>{c}...</ListHeading>
                      ))}
                    </tr>
                  </thead>
                </List>
              </ListHead>
            </ListArea>
          </Center>

          <Details>
            <DetailPanel title="Details Position" groups={positionDetails} gap={16} top={10} />
            <DetailPanel title="Details Auftrag" groups={orderDetails} gap={18} top={9} />
          </Details>
        </Body>
      </Window>
    </Desktop>
  );
}
